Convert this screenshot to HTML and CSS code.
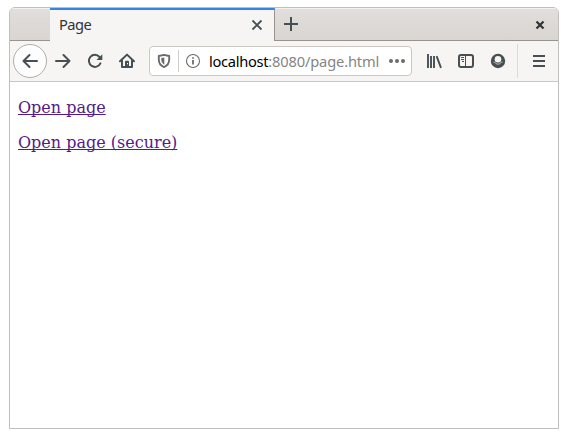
FILE: index.html
```html
<!DOCTYPE html>
<html lang="en">
<head>
<meta charset="utf-8">
<title>Page</title>
<link rel="stylesheet" href="styles.css">
</head>
<body>
<div class="window">
  <div class="tabs">
    <div class="tab">
      <span class="tab-title">Page</span>
      <svg class="icon" viewBox="0 0 16 16"><path d="M3.500 3.500l9 9M12.500 3.500l-9 9" stroke-width="1.8"/></svg>
    </div>
    <svg class="icon new-tab" viewBox="0 0 16 16"><path d="M8 1v14M1 8h14" stroke-width="2"/></svg>
    <svg class="icon close" viewBox="0 0 16 16"><path d="M4.500 4.500l7 7M11.500 4.500l-7 7" stroke-width="2.200"/></svg>
  </div>
  <div class="toolbar">
    <div class="button back"><svg class="icon" viewBox="0 0 16 16"><path d="M15 8H1.500M7.500 2L1.500 8l6 6" stroke-width="2" stroke-linecap="round" stroke-linejoin="round"/></svg></div>
    <div class="button"><svg class="icon" viewBox="0 0 16 16"><path d="M1 8h13.500M8.500 2l6 6-6 6" stroke-width="2" stroke-linecap="round" stroke-linejoin="round"/></svg></div>
    <div class="button"><svg class="icon" viewBox="0 0 16 16"><path d="M13.400 10.300A6 6 0 1 1 12.500 4" stroke-width="2" stroke-linecap="round"/><path class="solid" d="M15.300 1.200V7H9.500z"/></svg></div>
    <div class="button"><svg class="icon" viewBox="0 0 16 16"><path d="M1 8.300L8 1.600l7 6.700M3 7.500V14h10V7.500" stroke-width="2" stroke-linecap="round" stroke-linejoin="round"/><path class="solid" d="M6 14V8.800a1 1 0 0 1 1-1h2a1 1 0 0 1 1 1V14z"/><path class="hole" d="M8 10h1v1.300H8z"/></svg></div>
    <div class="urlbar">
      <svg class="icon shield" viewBox="0 0 16 16"><path d="M8 1.900l5.200 1.100v3.500c0 3.700-2 6.300-5.200 7.600-3.200-1.300-5.200-3.900-5.200-7.600V3z" stroke-width="1.900" stroke-linejoin="round"/><path class="solid" d="M8.300 4.500v7.200C6 10.300 5.300 8.500 5.300 6.500V5.100z"/></svg>
      <span class="divider"></span>
      <svg class="icon info" viewBox="0 0 16 16"><circle cx="8" cy="8" r="6.500" stroke-width="1.100"/><path d="M8 7v4.500M8 4.200v1.600" stroke-width="1.800"/></svg>
      <span class="address"><b>localhost</b>:8080/page.html</span>
      <svg class="icon dots" viewBox="0 0 16 16"><circle class="solid" cx="2" cy="8" r="2"/><circle class="solid" cx="8" cy="8" r="2"/><circle class="solid" cx="14" cy="8" r="2"/></svg>
    </div>
    <div class="button"><svg class="icon" viewBox="0 0 16 16"><path d="M2 1v14M5 3v12M8 3v12M10.600 3.200L15 14.800" stroke-width="1.900"/></svg></div>
    <div class="button"><svg class="icon" viewBox="0 0 16 16"><rect x="1" y="2" width="14" height="12" rx="2" stroke-width="2"/><path d="M7.500 2v12" stroke-width="1"/><path d="M3 4.500h3M3 6.500h3M4 8.500h2" stroke-width="1"/></svg></div>
    <div class="button"><svg class="icon" viewBox="0 0 16 16"><circle class="solid" cx="8" cy="8" r="7.200"/><circle class="hole" cx="8" cy="6.300" r="3.300"/><path class="gap" d="M3.500 9.200h1.200c.8 1.300 1.900 1.900 3.300 1.900s2.500-.6 3.300-1.900h1.200"/></svg></div>
    <span class="separator"></span>
    <div class="button"><svg class="icon" viewBox="0 0 16 16"><path d="M2 3h12M2 8h12M2 13h12" stroke-width="2"/></svg></div>
  </div>
  <main class="content">
    <p><a href="#">Open page</a></p>
    <p><a href="#">Open page (secure)</a></p>
  </main>
</div>
</body>
</html>
```
FILE: styles.css
```css
* { box-sizing: border-box; }
body {
  margin: 0;
  padding: 7px 9px 9px;
  height: 438px;
  background: #fff;
  overflow: hidden;
}
.window {
  width: 550px;
  height: 422px;
  border: 1px solid #bfbfbf;
  border-radius: 6px 6px 0 0;
  background: #fff;
  overflow: hidden;
}
.tabs {
  display: flex;
  align-items: center;
  height: 33px;
  padding-left: 40px;
  background: linear-gradient(#e1dedb, #d9d5d1);
  box-shadow: inset 0 -1px #979390, inset 0 1px #f4f2f1;
  font: 14.67px "Noto Sans", sans-serif;
  color: #2e3436;
}
.tab {
  display: flex;
  align-items: center;
  justify-content: space-between;
  width: 225px;
  height: 33px;
  padding: 0 9px 2px;
  border-top: 2px solid #3584e4;
  border-right: 1px solid #979390;
  background: #f6f5f4;
}
.tab-title {
  margin-bottom: 2px;
  letter-spacing: -0.5px;
}
.icon {
  display: block;
  flex: none;
  width: 16px;
  height: 16px;
  fill: none;
  stroke: #474f52;
}
.icon .solid { fill: #474f52; stroke: none; }
.icon .hole { fill: #f6f5f4; stroke: none; }
.icon .gap { stroke: #c9cbcb; stroke-width: 0.9; }
.new-tab { margin: 0 0 2px 8px; }
.close { margin: 1px 10px 0 auto; stroke: #2e3436; }
.toolbar {
  display: flex;
  align-items: center;
  height: 41px;
  padding: 0 3px;
  background: #f6f5f4;
  border-bottom: 1px solid #cdc7c2;
}
.button {
  display: flex;
  align-items: center;
  justify-content: center;
  flex: none;
  width: 32px;
  height: 34px;
}
.back {
  width: 34px;
  border: 1px solid #b0adab;
  border-radius: 50%;
  background: #fdfdfd;
}
.urlbar {
  display: flex;
  align-items: center;
  width: 263px;
  height: 30px;
  margin: 0 6px;
  padding: 0 6px;
  border: 1px solid #cdc7c2;
  border-radius: 4px;
  background: #fff;
}
.urlbar .icon { stroke: #6b6b6b; }
.urlbar .solid { fill: #6b6b6b; stroke: none; }
.divider {
  width: 1px;
  height: 22px;
  margin: 0 6px;
  background: #d0cccb;
}
.address {
  width: 172px;
  margin-left: 8px;
  font: 14.67px "Noto Sans", sans-serif;
  letter-spacing: -0.15px;
  white-space: nowrap;
  color: #858585;
}
.address b { font-weight: 400; letter-spacing: -0.3px; color: #000; }
.dots { margin-left: 8px; }
.separator {
  width: 1px;
  height: 34px;
  margin: 0 5px 0 3px;
  background: #dddbd9;
}
.content {
  padding: 16px 8px;
  font: 16px/19px "DejaVu Serif", serif;
}
.content p { margin: 0 0 16px; }
.content a { color: #551a8b; text-decoration-skip-ink: none; }
```
